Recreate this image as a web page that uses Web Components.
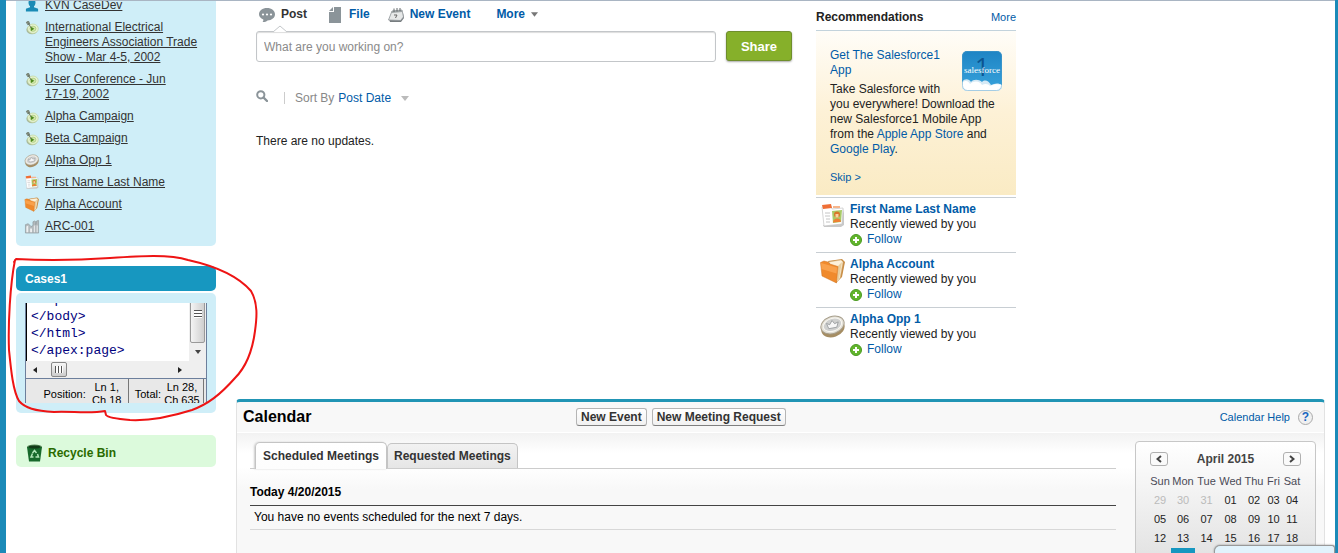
<!DOCTYPE html>
<html lang="en">
<head>
<meta charset="utf-8">
<title>Home</title>
<style>
	* { box-sizing: border-box; }
	html { height: 100%; }
	body {
		margin: 0;
		min-height: 100%;
		height: 100%;
		overflow: hidden;
		background: #fff;
		color: #222;
		font: 12px/15px "Liberation Sans", Arial, sans-serif;
	}
</style>
</head>
<body>
<app-page>
	<app-sidebar slot="sidebar">
		<recent-items></recent-items>
		<side-widget heading="Cases1"><code-frame></code-frame></side-widget>
		<recycle-link></recycle-link>
	</app-sidebar>
	<chatter-feed slot="feed"></chatter-feed>
	<recommendation-list slot="recs"></recommendation-list>
	<calendar-panel slot="calendar"></calendar-panel>
</app-page>

<script>
(() => {
	const ICONS = {
		person: `<svg viewBox="0 0 16 16"><path fill="#1b8bb5" d="M8 1c2.600 0 3.900 1.900 3.700 4.200-.1 1.500-.8 2.800-1.600 3.500v1.200l4.400 1.600V14.500h-13v-3l4.400-1.600V8.700C5.100 8 4.400 6.700 4.300 5.200 4.100 2.900 5.400 1 8 1z"/></svg>`,
		campaign: `<svg viewBox="0 0 16 16"><ellipse cx="8" cy="10.500" rx="6" ry="4.800" fill="#a9b89c"/><ellipse cx="9" cy="9.300" rx="5.700" ry="5" fill="#e6f2d2" stroke="#c0d69a" stroke-width=".7"/><ellipse cx="9" cy="9.300" rx="3.200" ry="2.800" fill="#d3e8b0" stroke="#a9cb78" stroke-width=".8"/><path fill="#4f8a1e" d="M6.500 7l4 2.300-3.500 2.500z"/><path d="M3 1.500l4 7M2 2.500l1.500 2.500 2-.5L4.500 1.500z" stroke="#6d7768" fill="#a5ada1"/></svg>`,
		coin: `<svg viewBox="0 0 26 26"><ellipse cx="13" cy="15.500" rx="12" ry="8.500" fill="#a58d63" transform="rotate(-20 13 15.500)"/><ellipse cx="12.500" cy="12" rx="12" ry="8.500" fill="#e4e1d8" stroke="#a69d8a" transform="rotate(-20 12.500 12)"/><ellipse cx="12.500" cy="11.800" rx="9.500" ry="6.300" fill="#cfd0cf" stroke="#faf8f2" transform="rotate(-20 12.500 11.800)"/><path fill="#f7f7f7" stroke="#8f9396" stroke-width=".8" d="M6.500 10.500l3.200 1.200L12 7.500l2.600 3.200 3.600-1.800-1.400 5.300-8 1.500z"/></svg>`,
		contact: `<svg viewBox="0 0 26 26"><path fill="#c9c9c9" d="M3 22l18-1 3-16v17l-3 2H4z"/><path fill="#fff" stroke="#c4c4c4" stroke-width=".7" d="M2 4l9-1 1 3 11-1-1 16-18 2z"/><path fill="#ef6f36" d="M2 2l9-1 1 4-9 1z"/><path fill="#f7b58c" d="M13 3h7v2h-7z"/><path stroke="#c4c4c4" d="M5 10h5M5 13h5M6 16h4M6 19h4"/><path fill="#a8cb68" d="M12 8l10-1-1 12-8 1z"/><circle cx="17" cy="11.500" r="3" fill="#d9772a"/><path fill="#f7d3a0" d="M15.500 11h3v3.500h-3z"/><path fill="#ee8034" d="M12.800 19.500c.5-5 7.500-5.500 8.300-.8z"/></svg>`,
		folder: `<svg viewBox="0 0 26 26"><path fill="#c98d45" d="M8 3l14-2 3 3-3 15-6 6z"/><path fill="#fdf1da" stroke="#d8bd8c" stroke-width=".5" d="M9 4l12-2 2 2-3 16-3 4z"/><path fill="#e9cf9f" d="M18 8l4-4-3 17-2 2z"/><path fill="#f08a2c" stroke="#cf7420" stroke-width=".5" d="M.5 4.500L4 3l4 1 2 2 8 2.500-1.500 16.500L2 18z"/><path fill="#ffb060" opacity=".6" d="M1 5l16 4.500-.5 6L1.500 11z"/></svg>`,
		building: `<svg viewBox="0 0 16 16"><path fill="#b3babd" stroke="#858e92" stroke-width=".6" d="M1 6l3-1 3 3 2-1V3l2-1 1 1v3l1-4 2-.5V15H1z"/><path fill="#eef0f1" d="M2 8l2-1v7H2zM6 10h2v4H6zM10 7h1v7h-1zM13 7h1v7h-1z"/></svg>`,
		bin: `<svg viewBox="0 0 16 18"><ellipse cx="8" cy="3" rx="7.500" ry="2.500" fill="#59895a"/><path fill="#17692b" d="M.5 3h15L13.500 17.500H2.500z"/><ellipse cx="8" cy="3" rx="6" ry="1.600" fill="#123b17"/><path d="M6 9l2-2.500L10 9M11 10l1 3H9M7 13H4.500L6 9.500" fill="none" stroke="#b1e5b8" stroke-width="1.500"/></svg>`,
		bubble: `<svg viewBox="0 0 16 16"><path fill="#8b9499" d="M8 1c4.500 0 8 2.600 8 6.300 0 3.500-3.200 6-7.500 6.200-1.500 1.200-3.300 1.900-5 1.500.7-.7 1-1.600.8-2.500C1.700 11.500 0 9.600 0 7.300 0 3.600 3.500 1 8 1z"/><g fill="#fff"><circle cx="4" cy="7.500" r="1.100"/><circle cx="8" cy="7.500" r="1.100"/><circle cx="12" cy="7.500" r="1.100"/></g></svg>`,
		file: `<svg viewBox="0 0 12 16"><path fill="#8b9499" d="M5 0h7v16H0V5h5z"/><path fill="#8b9499" d="M0 4l4-4v4z"/></svg>`,
		event: `<svg viewBox="0 0 16 16"><path fill="#777d80" d="M1 12l12-1 2-5 1 5-3 4H2z"/><path fill="#e6e8e8" stroke="#8c9295" stroke-width=".8" d="M4 4l10-1 1.500 7-3 3.500L.5 13z"/><path fill="#9da3a5" d="M4 4l10-1 .4 2L3.300 6z"/><path d="M6 1.500v3.500M9 1v3.500M12 1v3" stroke="#62686b"/><path d="M6 8h3L7.500 11" fill="none" stroke="#666"/></svg>`,
		search: `<svg viewBox="0 0 12 12"><circle cx="4.800" cy="4.800" r="3.600" fill="none" stroke="#8b9499" stroke-width="2"/><path d="M7.500 7.500l3.500 3.500" stroke="#8b9499" stroke-width="2.400" stroke-linecap="round"/></svg>`,
		down: `<svg viewBox="0 0 8 5"><path fill="currentColor" d="M0 0h8L4 5z"/></svg>`,
		plus: `<svg viewBox="0 0 12 12"><circle cx="6" cy="6" r="5.500" fill="#62b52c" stroke="#4a9a22"/><path d="M6 3v6M3 6h6" stroke="#fff" stroke-width="2"/></svg>`,
		prev: `<svg viewBox="0 0 6 8"><path d="M5 1L1.500 4 5 7" fill="none" stroke="#444" stroke-width="2"/></svg>`,
		next: `<svg viewBox="0 0 6 8"><path d="M1 1l3.500 3L1 7" fill="none" stroke="#444" stroke-width="2"/></svg>`,
	};

	const BASE = `
* { box-sizing: border-box; }
a { color: #015ba7; text-decoration: none; }
a:hover { text-decoration: underline; }
button, input { font: inherit; margin: 0; }
`;

	/**
	 * @param {string} name
	 * @param {string} css
	 * @param {string | ((el: HTMLElement) => string)} html
	 */
	function define(name, css, html) {
		customElements.define(
			name,
			class extends HTMLElement {
				connectedCallback() {
					if (this.shadowRoot) return;
					const template = document.createElement("template");
					const body = typeof html === "function" ? html(this) : html;
					template.innerHTML = `<style>${BASE}${css}</style>${body}`;
					this.attachShadow({ mode: "open" }).append(
						template.content.cloneNode(true),
					);
				}
			},
		);
	}

	define(
		"ui-icon",
		`
:host { display: inline-block; flex: none; width: var(--w, 16px); height: var(--h, 16px); }
svg { display: block; width: 100%; height: 100%; }
`,
		(el) => ICONS[el.getAttribute("name")] || "",
	);

	define(
		"app-page",
		`
:host {
	display: flex;
	height: 100%;
	overflow: hidden;
	border-left: 6px solid #1b8ab8;
	border-right: 3px solid #1b8ab8;
	box-shadow: inset 0 1px #a9b5c3;
}
.side { flex: none; width: 200px; margin: 1px 20px 0 10px; }
.main { flex: 1; min-width: 0; margin-right: 10px; }
.top { display: flex; gap: 24px; padding: 0 0 37px 20px; }
slot[name="feed"]::slotted(*) { flex: 0 1 536px; }
slot[name="recs"]::slotted(*) { flex: none; width: 200px; }
.chat {
	position: absolute;
	right: 3px;
	bottom: 0;
	width: 121px;
	height: 8px;
	border: 1px solid #999;
	border-bottom: 0;
	border-radius: 6px 3px 0 0;
	background: #e2f3fc;
	box-shadow: 0 0 2px #888;
}
`,
		`
<div class="side"><slot name="sidebar"></slot></div>
<div class="main">
	<div class="top"><slot name="feed"></slot><slot name="recs"></slot></div>
	<slot name="calendar"></slot>
</div>
<div class="chat"></div>
`,
	);

	define(
		"app-sidebar",
		`:host { display: flex; flex-direction: column; }`,
		`<slot></slot>`,
	);

	const RECENT = [
		["person", "KVN CaseDev"],
		["campaign", "International Electrical Engineers Association Trade Show - Mar <span>4-5,</span> 2002"],
		["campaign", "User Conference - Jun <span>17-19,</span> 2002"],
		["campaign", "Alpha Campaign"],
		["campaign", "Beta Campaign"],
		["coin", "Alpha Opp 1"],
		["contact", "First Name Last Name"],
		["folder", "Alpha Account"],
		["building", "ARC-001"],
	];

	define(
		"recent-items",
		`
:host { display: block; overflow: hidden; background: #cfeef8; border-radius: 0 0 5px 5px; margin-bottom: 20px; }
ul { list-style: none; margin: -3px 0 0; padding: 0 16px 12px 8px; display: flex; flex-direction: column; gap: 7px; }
li { display: flex; gap: 5px; }
li a { color: #333; text-decoration: underline; }
li span { white-space: nowrap; }
`,
		`<ul>${RECENT.map(([icon, text]) => `<li><ui-icon name="${icon}" style="--h:15px"></ui-icon><a href="#">${text}</a></li>`).join("")}</ul>`,
	);

	define(
		"side-widget",
		`
:host { display: block; position: relative; margin-bottom: 22px; }
h2 { margin: 0 0 2px; padding: 6px 9px 4px; font-size: 12px; line-height: 15px; color: #fff; background: #1797c0; border-radius: 5px; }
.body { padding: 10px 9px; background: #cfeef8; border-radius: 5px; }
.mark { position: absolute; left: -11px; top: -14px; width: 256px; height: 174px; pointer-events: none; }
`,
		(el) => `
<h2>${el.getAttribute("heading")}</h2>
<div class="body"><slot></slot></div>
<svg class="mark" viewBox="5 252 256 174"><path fill="none" stroke="#ee1414" stroke-width="2" stroke-linejoin="round" stroke-linecap="round" d="M14 262L16 259C55 261 80 260 110 258C140 256 170 254 188 260C215 266 238 276 251 291C258 303 257 317 255 331C252 354 244 369 235 378C220 395 208 404 192 410C170 417 150 421 130 420C118 419 108 418 106 415L105 411C90 414 70 411 54 412C35 411 25 408 19 401C13 391 11 370 9 350C8 325 10 285 15 260"/></svg>
`,
	);

	define(
		"code-frame",
		`
:host { display: block; height: 100px; overflow: hidden; border: solid #6c7f9c; border-width: 0 1px; background: #fff; }
.pane { display: flex; height: 70px; margin-top: -12px; }
pre { flex: 1; margin: 0; padding-left: 4px; border-left: 1px solid #000; font: 13px/17px "Liberation Mono", "Courier New", monospace; color: #00007c; }
.v { width: 17px; display: flex; flex-direction: column; align-items: center; background: #efefef; }
.v .thumb { width: 15px; height: 52px; padding-top: 18px; border: 1px solid #999; border-radius: 0 0 2px 2px; background: linear-gradient(90deg, #f4f4f4, #cfcfcf); display: flex; justify-content: center; }
.v i { display: block; width: 8px; height: 8px; background: repeating-linear-gradient(#555 0 1px, #fff 1px 3px); }
.v svg { margin-top: 7px; }
.h { display: flex; align-items: center; height: 17px; padding-right: 24px; background: #efefef; }
.h .thumb { width: 16px; height: 15px; margin-left: 14px; border: 1px solid #888; border-radius: 2px; background: linear-gradient(#f7f7f7, #ccc); display: grid; place-items: center; }
.h i { display: block; width: 8px; height: 7px; background: repeating-linear-gradient(90deg, #555 0 1px, #fff 1px 3px); }
.h svg:first-child { margin-left: 7px; }
.h svg:last-child { margin-left: auto; }
.status { display: flex; justify-content: flex-end; padding: 0 2px 0 0; border-top: 1px solid #6c7f9c; background: #e8e8e8; color: #000; font-size: 11px; line-height: 13px; }
.status div { display: flex; align-items: center; gap: 3px; padding: 2px 3px 0 6px; border-right: 1px solid #777; text-align: center; }
.status span { width: 36px; }
`,
		`
<div class="pane">
<pre>&lt;/apex:form&gt;
&lt;/body&gt;
&lt;/html&gt;
&lt;/apex:page&gt;</pre>
<div class="v"><div class="thumb"><i></i></div><svg width="6" height="4"><path fill="#444" d="M0 0h6L3 4z"/></svg></div>
</div>
<div class="h"><svg width="4" height="6"><path fill="#222" d="M4 0v6L0 3z"/></svg><div class="thumb"><i></i></div><svg width="4" height="6"><path fill="#222" d="M0 0v6l4-3z"/></svg></div>
<div class="status">
	<div>Position: <span>Ln 1,<br>Ch 18</span></div>
	<div>Total: <span>Ln 28,<br>Ch 635</span></div>
</div>
`,
	);

	define(
		"recycle-link",
		`
:host { display: block; }
a { display: flex; align-items: center; gap: 5px; height: 32px; padding: 4px 10px 0; border-radius: 5px; background: #dcfadc; color: #2a6b00; font-weight: bold; }
`,
		`<a href="#"><ui-icon name="bin" style="--w:17px;--h:18px"></ui-icon>Recycle Bin</a>`,
	);

	define(
		"chatter-feed",
		`
:host { display: block; padding-top: 6px; }
nav { display: flex; align-items: center; height: 17px; padding-left: 3px; font-weight: bold; }
nav a { display: flex; align-items: center; gap: 6px; margin-right: 20px; }
nav a.on { color: #333; margin-right: 22px; }
nav a.file { gap: 8px; margin-right: 18px; }
nav a.more { margin-left: 6px; }
nav ui-icon[name="down"] { color: #777; }
.publish { display: flex; gap: 10px; margin-top: 8px; }
.box { position: relative; flex: 1; display: flex; }
.box svg { position: absolute; left: 17px; top: -6px; }
input { width: 100%; height: 31px; padding: 0 7px; border: 1px solid #c3c6c9; border-radius: 3px; box-shadow: inset 0 1px 1px #ddd; color: #222; outline: 0; }
input::placeholder { color: #8a8a8a; }
.publish button { width: 66px; height: 30px; border: 1px solid #6f8e2c; border-radius: 3px; background: #86b02a; box-shadow: 0 1px 2px #aaa; color: #fff; font-size: 13px; font-weight: bold; padding: 0; }
.sort { display: flex; align-items: center; height: 16px; margin-top: 28px; color: #888; }
.sort .find { border: 0; background: none; padding: 0 0 5px; height: 16px; }
.sort .bar { width: 1px; height: 12px; margin: 0 10px 0 16px; background: #ccc; }
.sort a { display: flex; align-items: center; gap: 10px; margin-left: 4px; }
.sort a ui-icon { color: #bbb; }
p { margin: 28px 0 0; color: #222; }
`,
		`
<nav>
	<a class="on" href="#"><ui-icon name="bubble"></ui-icon>Post</a>
	<a class="file" href="#"><ui-icon name="file" style="--w:12px"></ui-icon>File</a>
	<a href="#"><ui-icon name="event"></ui-icon>New Event</a>
	<a class="more" href="#">More <ui-icon name="down" style="--w:7px;--h:5px"></ui-icon></a>
</nav>
<div class="publish">
	<div class="box">
		<input type="text" aria-label="Post" placeholder="What are you working on?">
		<svg width="14" height="8"><path fill="#fff" stroke="#c3c6c9" d="M0 7L7 1l7 6"/></svg>
	</div>
	<button type="button">Share</button>
</div>
<div class="sort">
	<button class="find" type="button" aria-label="Search"><ui-icon name="search" style="--w:12px;--h:12px"></ui-icon></button>
	<div class="bar"></div>
	Sort By <a href="#">Post Date <ui-icon name="down" style="--w:8px;--h:5px"></ui-icon></a>
</div>
<p>There are no updates.</p>
`,
	);

	define(
		"recommendation-item",
		`
:host { display: flex; gap: 4px; height: 55px; padding: 4px 4px 0; border-top: 1px solid #c8ced3; }
ui-icon { --w: 26px; --h: 26px; margin-top: 1px; }
.name { font-weight: bold; }
.follow { display: flex; align-items: center; gap: 5px; }
.follow ui-icon { --w: 12px; --h: 12px; margin: 0; }
`,
		(el) => `
<ui-icon name="${el.getAttribute("icon")}"></ui-icon>
<div>
	<a class="name" href="#"><slot></slot></a>
	<div>Recently viewed by you</div>
	<a class="follow" href="#"><ui-icon name="plus"></ui-icon>Follow</a>
</div>
`,
	);

	define(
		"recommendation-list",
		`
:host { display: block; }
header { display: flex; justify-content: space-between; height: 31px; padding-top: 10px; border-bottom: 1px solid #c3d3dc; }
h2 { margin: 0; font-size: 12px; line-height: 15px; }
header a, .skip { font-size: 11px; }
.card { height: 164px; margin-bottom: 2px; padding: 17px 14px 0; background: linear-gradient(#fffdf8, #fdf1d6 50%, #faebc4); }
.card p { margin: 4px 0 13px; }
.logo { float: right; width: 40px; height: 40px; margin: 3px 0 0 20px; }
`,
		`
<header><h2>Recommendations</h2><a href="#">More</a></header>
<div class="card">
	<svg class="logo" viewBox="0 0 40 40">
		<defs>
			<linearGradient id="sky" x2="0" y2="1"><stop stop-color="#1e84c4"/><stop offset="1" stop-color="#38a3dc"/></linearGradient>
			<clipPath id="tile"><rect width="40" height="40" rx="5"/></clipPath>
		</defs>
		<g clip-path="url(#tile)">
			<rect width="40" height="40" fill="url(#sky)"/>
			<text x="13" y="25" font-family="Open Sans, sans-serif" font-size="25" fill="#0b5490">1</text>
			<text x="20" y="22" text-anchor="middle" font-family="Liberation Serif, serif" font-size="9" fill="#fff">salesforce</text>
			<path fill="#d5e9f5" d="M0 31c3-4 7-3 9 0 2-3 8-3 11 0 3-3 7-1 9 3 4-2 8-2 11 0v6H0z"/>
			<path fill="#fff" d="M0 32c4-4 7-1 8 1 4-4 10-3 12 1 3-2 7-1 8 1 4-2 8-2 12-1v6H0z"/>
		</g>
		<rect x=".5" y=".5" width="39" height="39" rx="5" fill="none" stroke="#4c9cc9" stroke-opacity=".5"/>
	</svg>
	<a href="#">Get The Salesforce1 App</a>
	<p>Take Salesforce with you everywhere! Download the new Salesforce1 Mobile App from the <a href="#">Apple App Store</a> and <a href="#">Google Play</a>.</p>
	<a class="skip" href="#">Skip &gt;</a>
</div>
<recommendation-item icon="contact">First Name Last Name</recommendation-item>
<recommendation-item icon="folder">Alpha Account</recommendation-item>
<recommendation-item icon="coin">Alpha Opp 1</recommendation-item>
`,
	);

	const WEEKS = [
		[29, 30, 31, 1, 2, 3, 4],
		[5, 6, 7, 8, 9, 10, 11],
		[12, 13, 14, 15, 16, 17, 18],
	];

	define(
		"mini-calendar",
		`
:host { display: block; padding: 9px 13px 0; border: 1px solid #c7c7c7; border-radius: 4px; background: linear-gradient(#fff, #e4e4e4 110px); color: #333; }
header { display: flex; justify-content: space-between; align-items: center; height: 16px; margin-bottom: 5px; padding: 0 1px; font-size: 12px; font-weight: bold; color: #444; }
button { display: grid; place-items: center; width: 18px; height: 14px; padding: 0; border: 1px solid #b0b0b0; border-radius: 3px; background: #fafafa; }
table { width: 100%; table-layout: fixed; border-collapse: collapse; font-size: 11px; line-height: 15px; }
th { padding: 2px 0; font-weight: normal; color: #4a4a56; }
td { height: 19px; padding: 2px 0; text-align: center; color: #222; }
td.off { color: #bbb; }
td.today { padding: 0 2px; background: #1797c0 content-box; }
td.today { box-shadow: inset 0 0 0 20px #1797c0; }
`,
		`
<header>
	<button type="button" aria-label="Previous month"><ui-icon name="prev" style="--w:6px;--h:8px"></ui-icon></button>
	April 2015
	<button type="button" aria-label="Next month"><ui-icon name="next" style="--w:6px;--h:8px"></ui-icon></button>
</header>
<table>
	<colgroup><col style="width:22px"><col style="width:24px"><col style="width:23px"><col style="width:25px"><col style="width:22px"><col style="width:17px"><col style="width:20px"></colgroup>
	<thead><tr>${["Sun", "Mon", "Tue", "Wed", "Thu", "Fri", "Sat"].map((d) => `<th scope="col">${d}</th>`).join("")}</tr></thead>
	<tbody>${WEEKS.map((w, i) => `<tr>${w.map((d) => `<td${i === 0 && d > 20 ? ' class="off"' : ""}>${String(d).padStart(2, "0")}</td>`).join("")}</tr>`).join("")}
	<tr><td></td><td class="today"></td><td></td><td></td><td></td><td></td><td></td></tr></tbody>
</table>
`,
	);

	define(
		"calendar-panel",
		`
:host { display: block; border: 1px solid #e2e2e2; border-top: 3px solid #2195b5; border-radius: 4px 4px 0 0; background: #f8f8f8; color: #000; }
header { display: flex; align-items: center; height: 31px; padding: 0 11px 0 6px; border-bottom: 1px solid #fff; }
h2 { width: 333px; margin: 0; font-size: 16px; line-height: 20px; }
header button { height: 18px; margin-right: 5px; padding: 0 4px; border: 1px solid #b5b5b5; border-bottom-color: #7f7f7f; border-radius: 3px; background: linear-gradient(#fff, #f1f1f1); color: #333; font-weight: bold; line-height: 14px; }
.help { display: flex; align-items: center; gap: 8px; margin-left: auto; font-size: 11px; }
.help b { width: 15px; height: 15px; border: 1px solid #aaa; border-radius: 50%; background: #f0f0f0; text-align: center; line-height: 13px; color: #1766c0; font-size: 12px; }
.body { display: flex; align-items: flex-start; gap: 19px; min-height: 160px; padding: 8px 8px 0 13px; background: linear-gradient(#f2f2f2, #fff 20px, #fff 34px, #f8f8f8 56px); }
.list { flex: 1; min-width: 0; }
.tabs { display: flex; align-items: flex-end; height: 28px; padding-left: 5px; border-bottom: 1px solid #ccc; }
.tabs button { height: 25px; padding: 0 6px; border: 1px solid #c4c4c4; border-bottom: 0; border-radius: 5px 5px 0 0; background: linear-gradient(#f2f2f2, #e6e6e6); color: #333; font-weight: bold; }
.tabs button.on { height: 27px; padding: 0 7px; margin-bottom: -1px; background: linear-gradient(#fff, #fdfdfd); box-shadow: -1px 0 2px #ccc; }
h3 { margin: 0; padding: 16px 0 5px; font-size: 12px; line-height: 15px; border-bottom: 1px solid #444; }
p { margin: 0; padding: 4px; border-bottom: 1px solid #d8d8d8; }
mini-calendar { flex: none; width: 181px; }
`,
		`
<header>
	<h2>Calendar</h2>
	<button type="button">New Event</button>
	<button type="button">New Meeting Request</button>
	<a class="help" href="#">Calendar Help <b>?</b></a>
</header>
<div class="body">
	<div class="list">
		<div class="tabs" role="tablist">
			<button class="on" type="button" role="tab" aria-selected="true">Scheduled Meetings</button>
			<button type="button" role="tab" aria-selected="false">Requested Meetings</button>
		</div>
		<h3>Today 4/20/2015</h3>
		<p>You have no events scheduled for the next 7 days.</p>
	</div>
	<mini-calendar></mini-calendar>
</div>
`,
	);
})();
</script>
</body>
</html>
